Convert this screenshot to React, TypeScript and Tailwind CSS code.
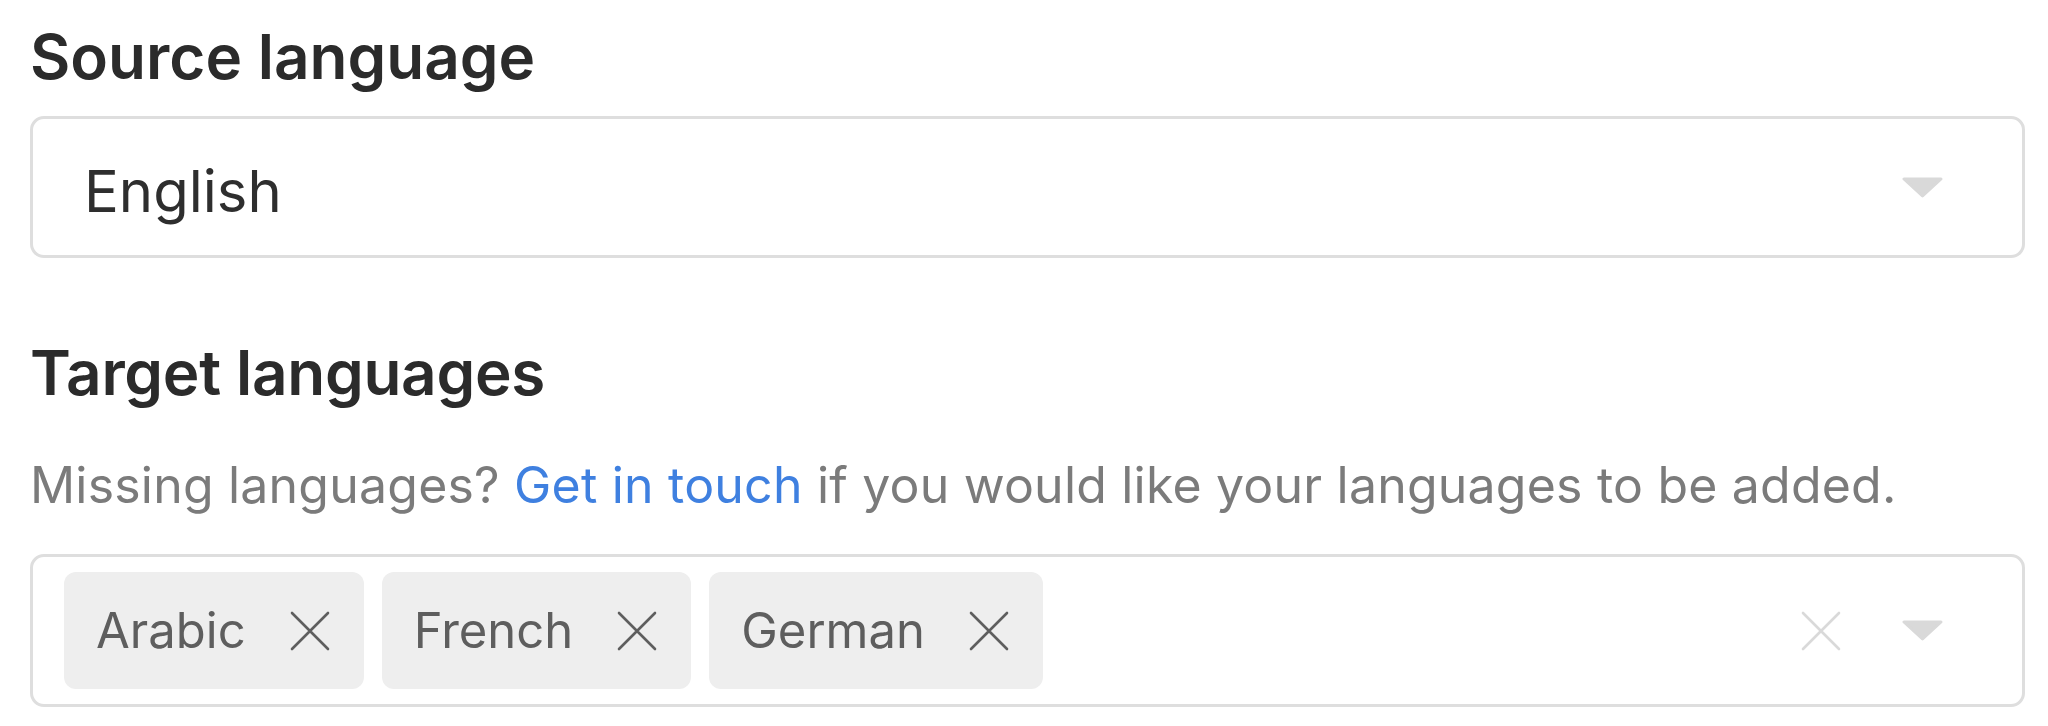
import React from "react";

const font = { fontFamily: "Inter, 'Liberation Sans', sans-serif" };

function Caret() {
  return (
    <svg width="41" height="21" viewBox="0 0 41 21" className="shrink-0">
      <path
        d="M2 2 L39 2 L20.5 19 Z"
        fill="#d9d9d9"
        stroke="#d9d9d9"
        strokeWidth="3"
        strokeLinejoin="round"
      />
    </svg>
  );
}

function Cross({ color, size = 40 }: { color: string; size?: number }) {
  return (
    <svg width={size} height={size} viewBox="0 0 40 40" className="shrink-0">
      <path d="M2 2 L38 38 M38 2 L2 38" stroke={color} strokeWidth="2.6" strokeLinecap="round" />
    </svg>
  );
}

function Chip({ label }: { label: string }) {
  return (
    <div className="flex items-center h-[117px] rounded-[12px] bg-[#eeeeee] pl-[32px] pr-[34px]">
      <span className="text-[49px] leading-none text-[#5e5e5e]">{label}</span>
      <span className="ml-[44px]">
        <Cross color="#5e5e5e" />
      </span>
    </div>
  );
}

export default function App() {
  return (
    <div className="min-h-screen bg-white pt-[17px] pl-[30px] pr-[23px]" style={font}>
      {/* Source language */}
      <h2 className="text-[62px] leading-[80px] font-semibold text-[#2b2b2b]">Source language</h2>
      <div className="mt-[19px] h-[142px] border-[3px] border-[#dedede] rounded-[14px] flex items-center pl-[51px] pr-[79px]">
        <span className="flex-1 mt-[7px] text-[58px] leading-none text-[#2e2e2e]">English</span>
        <Caret />
      </div>

      {/* Target languages */}
      <h2 className="mt-[75px] text-[62px] leading-[80px] font-semibold tracking-[-0.3px] text-[#2b2b2b]">
        Target languages
      </h2>
      <p className="mt-[37px] text-[50px] leading-[70px] tracking-[0.2px] text-[#7b7b7b]">
        Missing languages? <a className="text-[#3f80e0]">Get in touch</a> if you would like your languages to be added.
      </p>
      <div className="mt-[34px] h-[153px] border-[3px] border-[#dedede] rounded-[14px] flex items-center pl-[31px] pr-[79px]">
        <div className="flex-1 flex items-center gap-[18px]">
          <Chip label="Arabic" />
          <Chip label="French" />
          <Chip label="German" />
        </div>
        <Cross color="#d9d9d9" />
        <span className="ml-[61px]">
          <Caret />
        </span>
      </div>
    </div>
  );
}
